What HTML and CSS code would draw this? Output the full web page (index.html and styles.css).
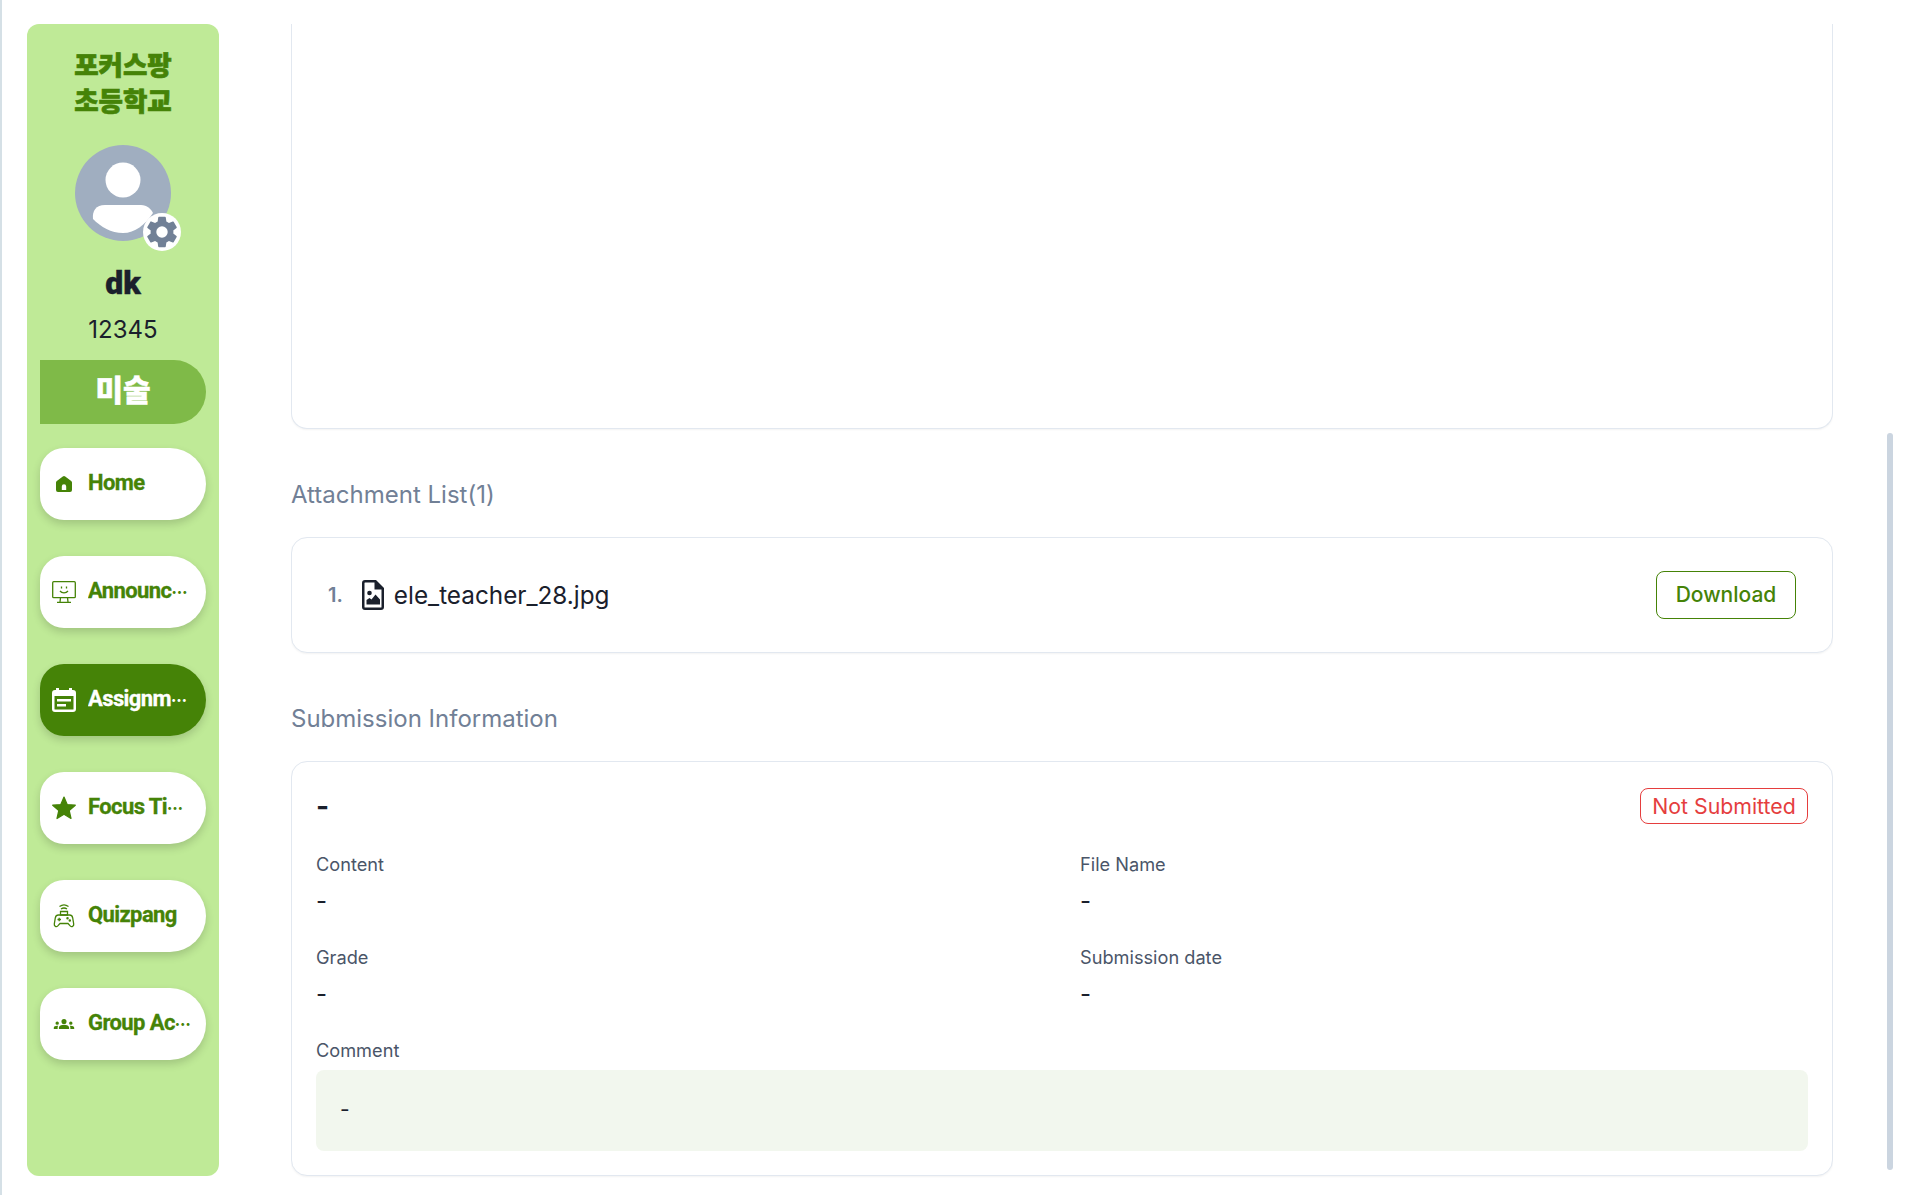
FILE: index.html
```html
<!DOCTYPE html>
<html lang="en">
<head>
<meta charset="utf-8">
<title>Assignment</title>
<link rel="stylesheet" href="styles.css">
</head>
<body>
<div class="app">
  <aside class="sidebar">
    <h1 class="school">포커스팡<br>초등학교</h1>
    <div class="avatar-wrap">
      <svg class="avatar" viewBox="0 0 96 96"><circle cx="48" cy="48" r="48" fill="#a0aec0"/><circle cx="48" cy="35" r="17.5" fill="#fff"/><path d="M30 60h36c6 0 10 4 12 8-8 12-18 20-30 20-12 0-22-6-30-14-1-8 3-14 12-14z" fill="#fff"/></svg>
      <span class="gear"><svg viewBox="0 0 24 24" width="38" height="38"><path fill="#718096" d="M19.14 12.94c.04-.3.06-.61.06-.94s-.02-.64-.07-.94l2.03-1.58a.49.49 0 0 0 .12-.61l-1.92-3.32a.49.49 0 0 0-.59-.22l-2.39.96a7 7 0 0 0-1.62-.94l-.36-2.54a.48.48 0 0 0-.48-.41h-3.84a.48.48 0 0 0-.47.41l-.36 2.54c-.59.24-1.13.57-1.62.94l-2.39-.96a.48.48 0 0 0-.59.22L2.74 8.87a.48.48 0 0 0 .12.61l2.03 1.58c-.05.3-.09.63-.09.94s.02.64.07.94l-2.03 1.58a.49.49 0 0 0-.12.61l1.92 3.32c.12.22.37.29.59.22l2.39-.96c.5.38 1.03.7 1.62.94l.36 2.54c.05.24.24.41.48.41h3.84c.24 0 .44-.17.47-.41l.36-2.54c.59-.24 1.13-.56 1.62-.94l2.39.96c.22.08.47 0 .59-.22l1.92-3.32a.48.48 0 0 0-.12-.61l-2.01-1.58zM12 15.6A3.6 3.6 0 1 1 12 8.4a3.6 3.6 0 0 1 0 7.2z"/></svg></span>
    </div>
    <div class="name">dk</div>
    <div class="code">12345</div>
    <div class="subject">미술</div>
    <nav class="nav">
      <a class="nav-item">
        <svg class="ico" viewBox="0 0 24 24"><path fill="currentColor" fill-rule="evenodd" d="M10.800 4.400a2 2 0 0 1 2.400 0l6 4.500a2 2 0 0 1 .8 1.600V18a2 2 0 0 1-2 2H6a2 2 0 0 1-2-2v-7.500a2 2 0 0 1 .8-1.600zM9.800 18h4.400v-3.500a2.200 2.200 0 0 0-4.400 0z"/></svg>
        <span class="label"><span class="label-text">Home</span></span>
      </a>
      <a class="nav-item">
        <svg class="ico" viewBox="0 0 24 24" fill="none" stroke="currentColor" stroke-width="1.300"><rect x=".7" y="1.700" width="22.600" height="16" rx="1"/><path d="M8.500 17.700 8 22M15.500 17.700l.5 4.300M5 22.400h14M8 11c2 2.500 6 2.500 8 0M9.500 6.500v2M14.500 6.500v2"/></svg>
        <span class="label"><span class="label-text">Announcements</span></span>
      </a>
      <a class="nav-item active">
        <svg class="ico" viewBox="0 0 24 24"><path fill="currentColor" fill-rule="evenodd" d="M3 2h1V0h3v2h10V0h3v2h1a3 3 0 0 1 3 3v16a3 3 0 0 1-3 3H3a3 3 0 0 1-3-3V5a3 3 0 0 1 3-3zM2.500 8v13a.5.5 0 0 0 .5.5h18a.5.5 0 0 0 .5-.5V8zM5 11h14v2.500H5zM5 16h9v2.500H5z"/></svg>
        <span class="label"><span class="label-text">Assignments</span></span>
      </a>
      <a class="nav-item">
        <svg class="ico" viewBox="0 0 24 24"><path fill="currentColor" stroke="currentColor" stroke-width="1.200" stroke-linejoin="round" d="M12 1l3.200 7.500 8.100.7-6.100 5.300 1.800 8-7-4.200-7 4.200 1.800-8L.7 9.200l8.100-.7z"/></svg>
        <span class="label"><span class="label-text">Focus Time</span></span>
      </a>
      <a class="nav-item">
        <svg class="ico" viewBox="0 0 24 24" fill="none" stroke="currentColor" stroke-width="1.300"><path d="M7.500 2.500c2.700-2 6.300-2 9 0M9 5c1.800-1.200 4.200-1.200 6 0"/><path d="M6.500 11h11c1.800 0 2.800 1 3.200 2.800l1 6.200c.3 2.300-2 3.400-3.500 1.900L16 19.500H8l-2.200 2.400c-1.500 1.500-3.800.4-3.500-1.900l1-6.200c.4-1.800 1.400-2.800 3.200-2.800z"/><path d="M8.500 7.500h7V11h-7zM5.500 15.500h3.500M7.200 13.700v3.500"/><circle cx="15.500" cy="14.200" r=".6"/><circle cx="17.800" cy="16.500" r=".6"/></svg>
        <span class="label"><span class="label-text">Quizpang</span></span>
      </a>
      <a class="nav-item">
        <svg class="ico" viewBox="0 0 24 24"><path fill="currentColor" transform="translate(1.800 1.800) scale(.85)" d="M12 12.750c1.630 0 3.070.39 4.240.9 1.080.48 1.760 1.560 1.760 2.730V18H6v-1.610c0-1.180.68-2.260 1.760-2.730 1.170-.52 2.610-.91 4.240-.91zM4 13a2 2 0 1 0 0-4 2 2 0 0 0 0 4zm1.130 1.100A7 7 0 0 0 4 14c-.99 0-1.930.21-2.780.58A2 2 0 0 0 0 16.430V18h4.500v-1.610c0-.83.23-1.610.63-2.290zM20 13a2 2 0 1 0 0-4 2 2 0 0 0 0 4zm4 3.430c0-.81-.48-1.530-1.220-1.850A7 7 0 0 0 20 14c-.39 0-.76.04-1.130.1.400.68.630 1.460.630 2.290V18H24zM12 6a3 3 0 1 1 0 6 3 3 0 0 1 0-6z"/></svg>
        <span class="label"><span class="label-text">Group Activity</span></span>
      </a>
    </nav>
  </aside>
  <main class="main">
    <section class="card card-top"></section>
    <h2 class="heading">Attachment List(1)</h2>
    <section class="card attach">
      <span class="num">1.</span>
      <svg class="file" viewBox="0 0 22 30"><path fill="#1a202c" fill-rule="evenodd" d="M3 0h11l8 8v19a3 3 0 0 1-3 3H3a3 3 0 0 1-3-3V3a3 3 0 0 1 3-3zM3 2.500a.5.5 0 0 0-.5.5v24a.5.5 0 0 0 .5.5h16a.5.5 0 0 0 .5-.5V9.500h-7v-7z"/><circle cx="7.500" cy="13" r="2.300" fill="#1a202c"/><path fill="#1a202c" d="M4.500 24.500V20l3-2 2 1.500 4-5 4.500 5v5z"/></svg>
      <span class="file-name">ele_teacher_28.jpg</span>
      <button class="download">Download</button>
    </section>
    <h2 class="heading">Submission Information</h2>
    <section class="card submit">
      <div class="submit-head">
        <span class="submit-title">-</span>
        <span class="badge">Not Submitted</span>
      </div>
      <dl class="fields">
        <div class="field"><dt>Content</dt><dd>-</dd></div>
        <div class="field"><dt>File Name</dt><dd>-</dd></div>
        <div class="field"><dt>Grade</dt><dd>-</dd></div>
        <div class="field"><dt>Submission date</dt><dd>-</dd></div>
      </dl>
      <div class="comment-label">Comment</div>
      <div class="comment">-</div>
    </section>
  </main>
  <div class="scroll-track"><div class="scroll-thumb"></div></div>
</div>
</body>
</html>
```
FILE: styles.css
```css
* { box-sizing: border-box; }
html, body { margin: 0; height: 100%; background: #fff; overflow: hidden; }
body { font-family: Inter, "Noto Sans CJK KR", sans-serif; color: #1a202c; }
.app { display: flex; height: 1195px; border-left: 2px solid #d5e0e6; }

.sidebar { flex: 0 0 192px; margin: 24px 0 19px 25px; background: #bfea97; border-radius: 12px; padding: 22px 13px 0; display: flex; flex-direction: column; align-items: center; }
.school { margin: 0; font: 900 26.500px/36px "Noto Sans CJK KR", sans-serif; color: #458307; text-align: center; -webkit-text-stroke: .7px #458307; }
.avatar-wrap { position: relative; width: 96px; height: 96px; margin-top: 27px; }
.avatar { display: block; width: 96px; height: 96px; }
.gear { position: absolute; right: -10px; bottom: -10px; width: 38px; height: 38px; border-radius: 50%; background: #fff; display: flex; align-items: center; justify-content: center; }
.name { margin-top: 22px; font: 900 32px/40px Roboto, sans-serif; color: #1a202c; -webkit-text-stroke: .4px #1a202c; }
.code { margin-top: 11px; font: 400 24px/32px Inter, sans-serif; color: #1a202c; }
.subject { margin-top: 14px; flex: 0 0 64px; width: 166px; background: #7fba48; border-radius: 0 32px 32px 0; color: #fff; font: 900 30px/56px "Noto Sans CJK KR", sans-serif; text-align: center; -webkit-text-stroke: .5px #fff; }
.nav { display: flex; flex-direction: column; gap: 36px; margin-top: 24px; width: 166px; }
.nav-item { display: flex; align-items: center; gap: 12px; height: 72px; padding: 0 12px; background: #fff; border-radius: 24px 36px 36px 24px; color: #458307; box-shadow: 0 4px 8px rgba(0,0,0,.16); }
.nav-item.active { background: #458307; color: #fff; }
.ico { flex: 0 0 24px; width: 24px; height: 24px; }
.label { display: block; min-width: 0; flex: 1; margin-right: -2px; padding-bottom: 2px; font: 900 16px/28px "Noto Sans CJK KR", sans-serif; white-space: nowrap; overflow: hidden; text-overflow: ellipsis; }
.label-text { font: 700 22px/28px Roboto, sans-serif; letter-spacing: -.6px; -webkit-text-stroke: .3px currentColor; }

.main { flex: 0 0 1542px; margin: 24px 0 0 72px; overflow: hidden; display: flex; flex-direction: column; }
.card { background: #fff; border: 1px solid #e2e8f0; border-radius: 16px; box-shadow: 0 1px 2px rgba(0,0,0,.05); }
.card-top { flex: 0 0 405px; border-top: 0; border-top-left-radius: 0; border-top-right-radius: 0; }
.heading { margin: 48px 0 0; font: 400 24px/36px Inter, sans-serif; color: #718096; height: 60px; }
.attach { flex: 0 0 116px; display: flex; align-items: center; padding: 0 36px; }
.num { font: 600 20px/28px Inter, sans-serif; color: #718096; margin-right: 19px; }
.file { width: 22px; height: 30px; margin-right: 10px; }
.file-name { font: 400 24.300px/32px Inter, sans-serif; color: #1a202c; flex: 1; }
.download { width: 140px; height: 48px; background: #fff; border: 1px solid #458307; border-radius: 8px; color: #458307; font: 500 21px/28px Inter, sans-serif; padding: 0; }
.submit { flex: 0 0 415px; padding: 24px; }
.submit-head { display: flex; justify-content: space-between; align-items: center; height: 40px; }
.submit-title { font: 700 28px/32px Inter, sans-serif; }
.badge { height: 36px; width: 168px; border: 1px solid #e53e3e; border-radius: 8px; color: #e53e3e; font: 400 21.300px/34px Inter, sans-serif; text-align: center; }
.fields { display: grid; grid-template-columns: 764px 1fr; margin: 24px 0 0; }
.field { height: 93px; }
dt { font: 400 18.200px/28px Inter, sans-serif; color: #4a5568; }
dd { margin: 8px 0 0; font: 400 24px/30px Inter, sans-serif; color: #1a202c; }
.comment-label { font: 400 18.200px/28px Inter, sans-serif; color: #4a5568; }
.comment { height: 81px; margin-top: 6px; padding: 24px; background: #f2f7ee; border-radius: 8px; font: 400 21px/32px Inter, sans-serif; }

.scroll-track { flex: 0 0 6px; margin-left: 54px; }
.scroll-thumb { margin-top: 433px; height: 737px; background: #cbd5e0; border-radius: 3px; }
```
